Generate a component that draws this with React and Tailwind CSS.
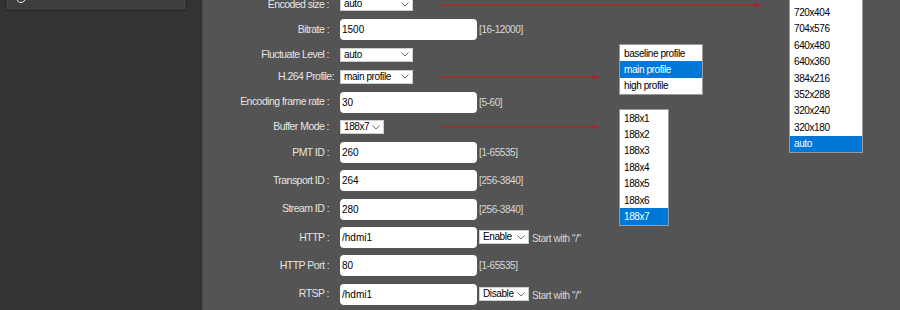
import { useState } from 'react';

const FONT = { fontFamily: '"Liberation Sans", Arial, sans-serif' };

function Chevron() {
  return (
    <svg width="8" height="5" viewBox="0 0 8 5" className="shrink-0">
      <path d="M0.5 0.5 L4 4 L7.5 0.5" fill="none" stroke="#6b6b6b" strokeWidth="1" />
    </svg>
  );
}

function Select({ value, width }) {
  return (
    <div
      className={`flex items-center justify-between h-[14px] bg-white border border-[#cfcfcf] pl-[3px] pr-[3px] text-[10px] tracking-[-0.4px] text-black leading-none ${width}`}
    >
      <span>{value}</span>
      <Chevron />
    </div>
  );
}

function TextBox({ value }) {
  const [v, setV] = useState(value);
  return (
    <input
      value={v}
      onChange={(e) => setV(e.target.value)}
      className="w-[137px] h-[21px] rounded-[4px] bg-white pl-[2px] text-[10px] text-black outline-none"
    />
  );
}

function Label({ children, shift = '' }) {
  return (
    <div className={`w-[126px] text-right text-[10.5px] tracking-[-0.55px] text-[#e4e4e4] whitespace-nowrap ${shift}`}>
      {children}
    </div>
  );
}

function Hint({ children }) {
  return <span className="text-[10px] tracking-[-0.4px] text-[#d8d8d8] whitespace-nowrap">{children}</span>;
}

function Arrow({ left, top, width }) {
  return (
    <svg
      className="absolute"
      style={{ left, top: top - 3 }}
      width={width}
      height="6"
      viewBox={`0 0 ${width} 6`}
    >
      <line x1="0" y1="3" x2={width - 5} y2="3" stroke="#c8161c" strokeWidth="1" />
      <path d={`M${width - 6} 0.8 L${width} 3 L${width - 6} 5.2 Z`} fill="#c8161c" />
    </svg>
  );
}

function DropList({ items, active, className }) {
  return (
    <div className={`absolute bg-white border border-[#9a9a9a] ${className}`}>
      {items.map((it) => (
        <div
          key={it}
          className={`h-[16.4px] flex items-center pl-[4px] pr-2 text-[10px] tracking-[-0.4px] whitespace-nowrap ${
            it === active ? 'bg-[#0078d7] text-white' : 'text-black'
          }`}
        >
          {it}
        </div>
      ))}
    </div>
  );
}

export default function App() {
  return (
    <div className="flex w-[900px] h-[310px] overflow-hidden" style={FONT}>
      {/* Sidebar */}
      <div className="w-[202px] h-full bg-[#333333] shrink-0">
        <div className="-mt-[20px] ml-[5px] w-[182px] h-[31px] bg-gradient-to-b from-[#474747] to-[#3c3c3c] border border-[#262626] border-t-0 flex items-end pb-[7px] pl-[10px] gap-[8px]">
          <div className="w-[10px] h-[10px] rounded-full border-[1.5px] border-[#e5e5e5]" />
          <span className="text-[10px] text-[#bdbdbd]">Status</span>
        </div>
      </div>

      {/* Main */}
      <div className="relative flex-1 h-full bg-[#545454] border-l border-[#4a4a4a]">
        <div className="-mt-[6.6px] flex flex-col">
          <div className="h-[22.1px] flex items-center">
            <Label>Encoded size :</Label>
            <div className="ml-[11px]"><Select value="auto" width="w-[73px]" /></div>
          </div>
          <div className="h-[28.3px] flex items-center">
            <Label>Bitrate :</Label>
            <div className="ml-[11px] flex items-center gap-[2px]">
              <TextBox value="1500" />
              <Hint>[16-12000]</Hint>
            </div>
          </div>
          <div className="h-[22.1px] flex items-center">
            <Label>Fluctuate Level :</Label>
            <div className="ml-[11px]"><Select value="auto" width="w-[73px]" /></div>
          </div>
          <div className="h-[22.1px] flex items-center">
            <Label shift="relative left-[5px]">H.264 Profile:</Label>
            <div className="ml-[11px]"><Select value="main profile" width="w-[73px]" /></div>
          </div>
          <div className="h-[28.3px] flex items-center">
            <Label>Encoding frame rate :</Label>
            <div className="ml-[11px] flex items-center gap-[2px]">
              <TextBox value="30" />
              <Hint>[5-60]</Hint>
            </div>
          </div>
          <div className="h-[22.1px] flex items-center">
            <Label>Buffer Mode :</Label>
            <div className="ml-[11px]"><Select value="188x7" width="w-[44px]" /></div>
          </div>
          <div className="h-[28.3px] flex items-center">
            <Label>PMT ID :</Label>
            <div className="ml-[11px] flex items-center gap-[2px]">
              <TextBox value="260" />
              <Hint>[1-65535]</Hint>
            </div>
          </div>
          <div className="h-[28.3px] flex items-center">
            <Label>Transport ID :</Label>
            <div className="ml-[11px] flex items-center gap-[2px]">
              <TextBox value="264" />
              <Hint>[256-3840]</Hint>
            </div>
          </div>
          <div className="h-[28.3px] flex items-center">
            <Label>Stream ID :</Label>
            <div className="ml-[11px] flex items-center gap-[2px]">
              <TextBox value="280" />
              <Hint>[256-3840]</Hint>
            </div>
          </div>
          <div className="h-[28.3px] flex items-center">
            <Label>HTTP :</Label>
            <div className="ml-[11px] flex items-center gap-[2px]">
              <TextBox value="/hdmi1" />
              <Select value="Enable" width="w-[50px]" />
              <span className="ml-[1px]"><Hint>Start with "/"</Hint></span>
            </div>
          </div>
          <div className="h-[28.3px] flex items-center">
            <Label>HTTP Port :</Label>
            <div className="ml-[11px] flex items-center gap-[2px]">
              <TextBox value="80" />
              <Hint>[1-65535]</Hint>
            </div>
          </div>
          <div className="h-[28.3px] flex items-center">
            <Label>RTSP :</Label>
            <div className="ml-[11px] flex items-center gap-[2px]">
              <TextBox value="/hdmi1" />
              <Select value="Disable" width="w-[50px]" />
              <span className="ml-[1px]"><Hint>Start with "/"</Hint></span>
            </div>
          </div>
        </div>

        {/* annotation arrows */}
        <Arrow left={236} top={4.5} width={322} />
        <Arrow left={236} top={77} width={160} />
        <Arrow left={236} top={126.7} width={160} />

        {/* opened option lists */}
        <DropList
          className="left-[416px] top-[44px] w-[84px]"
          items={['baseline profile', 'main profile', 'high profile']}
          active="main profile"
        />
        <DropList
          className="left-[416px] top-[109px] w-[50px]"
          items={['188x1', '188x2', '188x3', '188x4', '188x5', '188x6', '188x7']}
          active="188x7"
        />
        <DropList
          className="left-[586px] -top-[13px] w-[74px]"
          items={['720x480', '720x404', '704x576', '640x480', '640x360', '384x216', '352x288', '320x240', '320x180', 'auto']}
          active="auto"
        />
      </div>
    </div>
  );
}
